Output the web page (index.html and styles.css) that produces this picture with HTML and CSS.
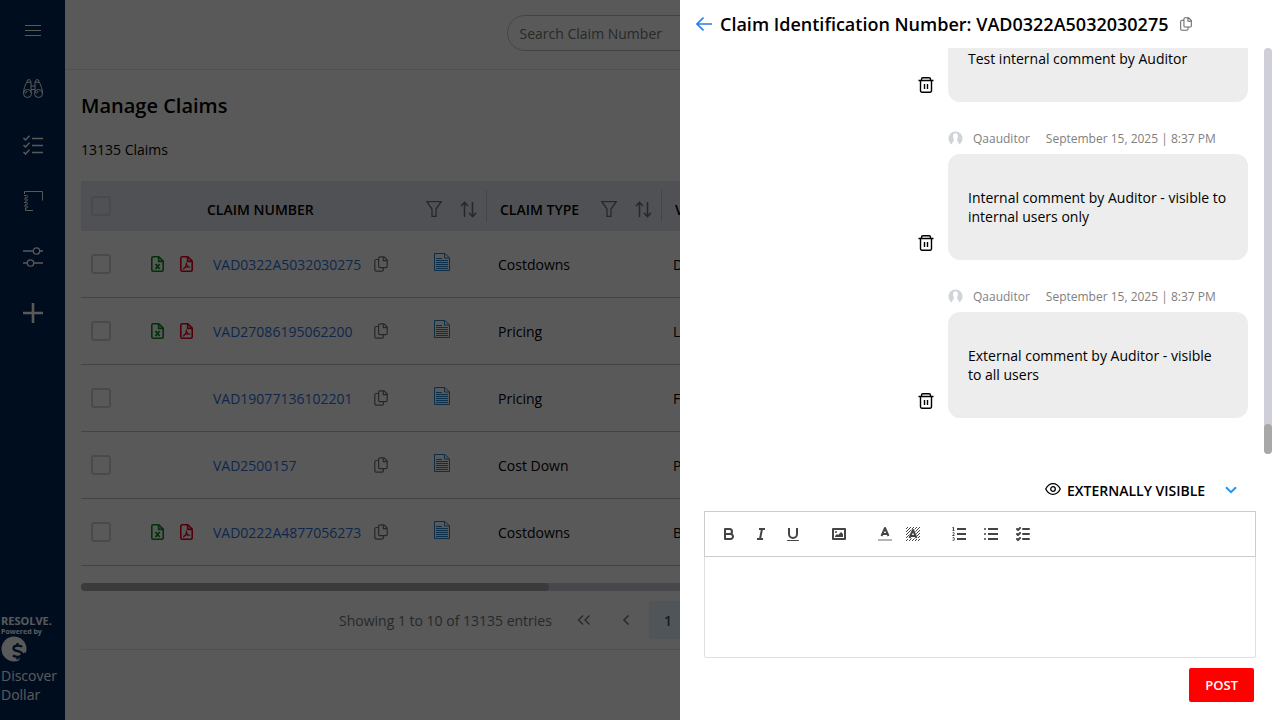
FILE: index.html
```html
<!DOCTYPE html>
<html lang="en">
<head>
<meta charset="utf-8">
<title>Manage Claims</title>
<link rel="stylesheet" href="styles.css">
</head>
<body>
<svg class="sprite" aria-hidden="true">
  <symbol id="copy" viewBox="0 0 14 16"><path d="M6 .8h4l3.2 3.2v6.2a1.4 1.4 0 0 1-1.4 1.4H6a1.4 1.4 0 0 1-1.400-1.400V2.200A1.400 1.400 0 0 1 6 .8zM9.300 1v3.700h3.700M4.500 3.500H2.200A1.400 1.400 0 0 0 .8 4.900v8.900a1.400 1.400 0 0 0 1.400 1.400h5.800a1.400 1.400 0 0 0 1.400-1.400v-2" fill="none" stroke="currentColor" stroke-width="1.200"/></symbol>
  <symbol id="excel" viewBox="0 0 13 16"><path d="M2.200.8h5.600l4.400 4.400v8.600a1.400 1.400 0 0 1-1.400 1.400H2.200a1.400 1.400 0 0 1-1.400-1.400V2.200A1.400 1.400 0 0 1 2.200.8zM7.600 1v4.400H12" fill="none" stroke="currentColor" stroke-width="1.600"/><path d="M4.500 8l4.200 5M8.700 8l-4.200 5" fill="none" stroke="currentColor" stroke-width="1.800"/></symbol>
  <symbol id="pdf" viewBox="0 0 13 16"><path d="M2.200.8h5.600l4.400 4.400v8.600a1.400 1.400 0 0 1-1.400 1.400H2.200a1.400 1.400 0 0 1-1.400-1.400V2.200A1.400 1.400 0 0 1 2.200.8zM7.600 1v4.400H12" fill="none" stroke="currentColor" stroke-width="1.600"/><path d="M6.200 6.500c.3 2.500 1.800 4.700 4 5M6.300 7c.2 2.500-1.300 5.500-3.300 6.300M3.600 12.300c1.700-1.300 4.400-1.700 6.500-1.100" fill="none" stroke="currentColor" stroke-width="1.100"/></symbol>
  <symbol id="doc" viewBox="0 0 16 18"><path d="M.5.5h10.500l4.500 4.500v12.500H.5zM10.500.5v4.500h5M2 5.500h6M2 7.500h12M2 9.500h12M2 11.500h12M2 13.500h12M2 15.500h12" fill="none" stroke="currentColor"/></symbol>
  <symbol id="funnel" viewBox="0 0 16 16"><path d="M.8.7h14.400L10 8v7.300H6V8z" fill="none" stroke="currentColor" stroke-width="1.300"/></symbol>
  <symbol id="sort" viewBox="0 0 17 17"><path d="M4.500 16V1.500M1 5l3.500-3.500L8 5M12.500 1v14.500M9 12l3.500 3.500L16 12" fill="none" stroke="currentColor" stroke-width="1.600"/></symbol>
  <symbol id="trash" viewBox="0 0 16 16"><path d="M.5 3.500h15M3.500 3.500V2.200A1.400 1.400 0 0 1 4.900.8h6.200a1.400 1.400 0 0 1 1.400 1.400v1.300M2.500 3.500v10.300a1.400 1.400 0 0 0 1.400 1.400h8.200a1.400 1.400 0 0 0 1.400-1.400V3.500M6.500 7v5M9.500 7v5" fill="none" stroke="currentColor" stroke-width="1.400"/></symbol>
  <symbol id="avatar" viewBox="0 0 16 16"><circle cx="8" cy="8" r="7.500" fill="#d0d3da"/><path d="M8 2.500c-2 0-2.900 1.500-2.600 3.600.2 1.500.9 2.200.9 3.200 0 1.900-1.800 2.500-2.300 5.200A7.500 7.500 0 0 0 8 16a7.500 7.500 0 0 0 4-1.500c-.5-2.700-2.300-3.300-2.300-5.200 0-1 .7-1.700.9-3.200.3-2.100-.6-3.600-2.600-3.600z" fill="#fff"/></symbol>
</svg>

<div class="app">
  <nav class="sidebar" aria-label="Main">
    <button class="nav-item nav-menu" aria-label="Menu"><svg width="16" height="12" viewBox="0 0 16 12"><path d="M0 .5h16M0 5.500h16M0 10.500h16" stroke="currentColor"/></svg></button>
    <button class="nav-item" aria-label="Search"><svg width="20" height="20" viewBox="0 0 20 20" fill="none" stroke="currentColor"><circle cx="4.500" cy="14.500" r="4"/><circle cx="15.500" cy="14.500" r="4"/><path d="M.5 14.500C.5 10 2 7 3.500 3.500L8 3v11M19.500 14.500C19.500 10 18 7 16.500 3.500L12 3v11M4 3l.5-2 2-.5L8 3M16 3l-.5-2-2-.5L12 3M8 7h4M8 10.500h4M2.500 14.500a2 2 0 0 1 2-2M13.500 14.500a2 2 0 0 1 2-2"/></svg></button>
    <button class="nav-item" aria-label="Tasks"><svg width="20" height="20" viewBox="0 0 20 20" fill="none" stroke="currentColor" stroke-width="1.500"><path d="M9 3.500h11M9 10.500h11M9 17.500h11M.5 3l2 2L6.500.8M.5 10l2 2 4-4.200M.5 17l2 2 4-4.200"/></svg></button>
    <button class="nav-item" aria-label="Notebook"><svg width="20" height="20" viewBox="0 0 20 20" fill="none" stroke="currentColor"><path d="M1.500 3V.5h18v9M2.500 17v2.500H10M1 4.500h2.500a1 1 0 0 1 0 2H2M1 8h2.500a1 1 0 0 1 0 2H2M1 11.500h2.500a1 1 0 0 1 0 2H2M1 15h2.500a1 1 0 0 1 0 2H2"/></svg></button>
    <button class="nav-item" aria-label="Settings"><svg width="20" height="20" viewBox="0 0 20 20" fill="none" stroke="currentColor" stroke-width="1.300"><path d="M0 4h10.500M16.500 4H20M0 16h4.500M10.500 16H20"/><circle cx="13.500" cy="4" r="3.200"/><circle cx="7.500" cy="16" r="3.200"/></svg></button>
    <button class="nav-item" aria-label="Add"><svg width="20" height="20" viewBox="0 0 20 20"><path d="M10 0v20M0 10h20" stroke="currentColor" stroke-width="2.600"/></svg></button>
    <div class="brand">
      <strong class="brand-name">RESOLVE.</strong>
      <span class="brand-by">Powered by</span>
      <svg width="26" height="26" viewBox="0 0 26 26"><circle cx="13" cy="13" r="12.500" fill="currentColor"/><path d="M21 11c-1-1.800-8.500-2.500-8.500 1.400 0 3.800 8.500 1.600 8.500 5.600 0 3.500-7 3.500-9 1.400M16.500 7v3M16.500 20.500v3" fill="none" stroke="#00255b" stroke-width="2.300"/><path d="M19 20l5-4 2 4-5 6h-3z" fill="#00255b"/></svg>
      <span class="brand-company">Discover Dollar</span>
    </div>
  </nav>

  <div class="main">
    <header class="topbar"><input class="search" type="search" placeholder="Search Claim Number" aria-label="Search Claim Number"></header>
    <main class="content">
      <h1 class="page-title">Manage Claims</h1>
      <p class="count">13135 Claims</p>
      <div class="table-wrap">
        <table class="claims">
          <colgroup><col class="col-check"><col class="col-number"><col class="col-type"><col></colgroup>
          <thead>
            <tr>
              <th><input type="checkbox" class="check" aria-label="Select all"></th>
              <th><div class="head head-number"><span>CLAIM NUMBER</span><svg class="ic-funnel"><use href="#funnel"/></svg><svg class="ic-sort"><use href="#sort"/></svg></div></th>
              <th><div class="head"><span>CLAIM TYPE</span><svg class="ic-funnel"><use href="#funnel"/></svg><svg class="ic-sort"><use href="#sort"/></svg></div></th>
              <th><div class="head head-last"><span>V</span></div></th>
            </tr>
          </thead>
          <tbody>
            <tr>
              <td><input type="checkbox" class="check" aria-label="Select VAD0322A5032030275"></td>
              <td><div class="claim"><svg class="ic-file green"><use href="#excel"/></svg><svg class="ic-file red"><use href="#pdf"/></svg><a href="#">VAD0322A5032030275</a><svg class="ic-copy"><use href="#copy"/></svg><svg class="ic-doc"><use href="#doc"/></svg></div></td>
              <td>Costdowns</td><td>D</td>
            </tr>
            <tr>
              <td><input type="checkbox" class="check" aria-label="Select VAD27086195062200"></td>
              <td><div class="claim"><svg class="ic-file green"><use href="#excel"/></svg><svg class="ic-file red"><use href="#pdf"/></svg><a href="#">VAD27086195062200</a><svg class="ic-copy"><use href="#copy"/></svg><svg class="ic-doc"><use href="#doc"/></svg></div></td>
              <td>Pricing</td><td>L</td>
            </tr>
            <tr>
              <td><input type="checkbox" class="check" aria-label="Select VAD19077136102201"></td>
              <td><div class="claim"><i></i><i></i><a href="#">VAD19077136102201</a><svg class="ic-copy"><use href="#copy"/></svg><svg class="ic-doc"><use href="#doc"/></svg></div></td>
              <td>Pricing</td><td>F</td>
            </tr>
            <tr>
              <td><input type="checkbox" class="check" aria-label="Select VAD2500157"></td>
              <td><div class="claim"><i></i><i></i><a href="#">VAD2500157</a><svg class="ic-copy"><use href="#copy"/></svg><svg class="ic-doc"><use href="#doc"/></svg></div></td>
              <td>Cost Down</td><td>P</td>
            </tr>
            <tr>
              <td><input type="checkbox" class="check" aria-label="Select VAD0222A4877056273"></td>
              <td><div class="claim"><svg class="ic-file green"><use href="#excel"/></svg><svg class="ic-file red"><use href="#pdf"/></svg><a href="#">VAD0222A4877056273</a><svg class="ic-copy"><use href="#copy"/></svg><svg class="ic-doc"><use href="#doc"/></svg></div></td>
              <td>Costdowns</td><td>B</td>
            </tr>
          </tbody>
        </table>
      </div>
      <div class="hscroll"><div class="hscroll-thumb"></div></div>
      <div class="paginator">
        <span class="entries">Showing 1 to 10 of 13135 entries</span>
        <button class="page" aria-label="First page"><svg width="14" height="10" viewBox="0 0 14 10"><path d="M6 .5L1.500 5 6 9.500M12.500.5L8 5l4.500 4.500" fill="none" stroke="currentColor" stroke-width="1.400"/></svg></button>
        <button class="page" aria-label="Previous page"><svg width="8" height="10" viewBox="0 0 8 10"><path d="M6.500.5L2 5l4.500 4.500" fill="none" stroke="currentColor" stroke-width="1.500"/></svg></button>
        <button class="page page-current">1</button>
      </div>
    </main>
  </div>
</div>

<div class="overlay"></div>

<aside class="drawer" aria-label="Claim comments">
  <header class="drawer-head">
    <button class="plain back" aria-label="Back"><svg width="16" height="14" viewBox="0 0 16 14"><path d="M16 7H1M7.500.6L1 7l6.500 6.400" fill="none" stroke="currentColor" stroke-width="1.600"/></svg></button>
    <h2 class="drawer-title">Claim Identification Number: VAD0322A5032030275</h2>
    <button class="plain copy" aria-label="Copy"><svg class="ic-copy-small"><use href="#copy"/></svg></button>
  </header>
  <div class="thread">
    <div class="comments">
      <article class="comment">
        <button class="plain trash" aria-label="Delete"><svg class="ic-trash"><use href="#trash"/></svg></button>
        <p class="bubble">Test internal comment by Auditor</p>
      </article>
      <article class="comment">
        <div class="meta"><svg class="ic-avatar"><use href="#avatar"/></svg><span>Qaauditor</span><time>September 15, 2025 | 8:37 PM</time></div>
        <button class="plain trash" aria-label="Delete"><svg class="ic-trash"><use href="#trash"/></svg></button>
        <p class="bubble">Internal comment by Auditor - visible to internal users only</p>
      </article>
      <article class="comment">
        <div class="meta"><svg class="ic-avatar"><use href="#avatar"/></svg><span>Qaauditor</span><time>September 15, 2025 | 8:37 PM</time></div>
        <button class="plain trash" aria-label="Delete"><svg class="ic-trash"><use href="#trash"/></svg></button>
        <p class="bubble">External comment by Auditor - visible to all users</p>
      </article>
    </div>
    <div class="vscroll"><div class="vscroll-thumb"></div></div>
  </div>
  <form class="composer">
    <label class="visibility">
      <svg class="eye" width="16" height="12" viewBox="0 0 16 12" fill="none" stroke="currentColor" stroke-width="1.300"><path d="M.7 6C2.500 2.500 5 .7 8 .7S13.500 2.500 15.300 6C13.500 9.500 11 11.300 8 11.300S2.500 9.500.7 6z"/><circle cx="8" cy="6" r="2.300"/></svg>
      <select class="visibility-select" aria-label="Comment visibility"><option>EXTERNALLY VISIBLE</option></select>
      <svg class="chevron" width="12" height="8" viewBox="0 0 12 8"><path d="M1 1.200l5 5 5-5" fill="none" stroke="currentColor" stroke-width="2"/></svg>
    </label>
    <div class="toolbar">
      <div class="tools spaced">
        <button type="button" class="tool" aria-label="Bold"><svg viewBox="0 0 18 18"><path d="M5,4H9.500A2.500,2.500,0,0,1,12,6.500v0A2.500,2.500,0,0,1,9.500,9H5V4Z"/><path d="M5,9h5.500A2.500,2.500,0,0,1,13,11.500v0A2.500,2.500,0,0,1,10.500,14H5V9Z"/></svg></button>
        <button type="button" class="tool" aria-label="Italic"><svg viewBox="0 0 18 18"><path d="M7 4h6M5 14h6M8 14L10 4"/></svg></button>
        <button type="button" class="tool" aria-label="Underline"><svg viewBox="0 0 18 18"><path d="M5,3V9a4,4,0,0,0,8,0V3"/><rect class="fill" x="3" y="15" width="12" height="1" rx=".5"/></svg></button>
      </div>
      <div class="tools">
        <button type="button" class="tool" aria-label="Image"><svg viewBox="0 0 18 18"><rect x="3" y="4" width="12" height="10"/><circle class="fill" cx="6" cy="7" r="1"/><path class="fill" d="M5 12v-1l2-2 1 1 3-3 2 2v3z"/></svg></button>
      </div>
      <div class="tools">
        <button type="button" class="tool" aria-label="Text color"><svg viewBox="0 0 18 18"><path opacity=".4" d="M2 15h14"/><path d="M5.500 11L9 3l3.500 8M11.630 9H6.380"/></svg></button>
        <button type="button" class="tool" aria-label="Highlight color"><svg viewBox="0 0 18 18"><defs><pattern id="hatch" width="3" height="3" patternUnits="userSpaceOnUse"><path class="fill" d="M2 0h1v1H2zM1 1h1v1H1zM0 2h1v1H0z"/></pattern></defs><path d="M2 2h14v14H2zM7.500 4L4 13v1h3l1-1h2l1 1h3v-1L10.500 4z" fill="url(#hatch)" fill-rule="evenodd" stroke="none"/><path d="M5.500 13L9 5l3.500 8M11.630 11H6.380"/></svg></button>
      </div>
      <div class="tools spaced">
        <button type="button" class="tool" aria-label="Numbered list"><svg viewBox="0 0 18 18"><path d="M7 4h9M7 9h9M7 14h9"/><path class="thin" d="M2.500 5.500h2M2.300 2.800l1.200-.5v3M4.500,10.500h-2c0-.234,1.850-1.076,1.850-2.234A0.959,0.959,0,0,0,2.500,8.156M2.500,14.846a0.959,0.959,0,0,0,1.850-.109A0.700,0.700,0,0,0,3.750,14a0.688,0.688,0,0,0,.6-0.736,0.959,0.959,0,0,0-1.850-.109"/></svg></button>
        <button type="button" class="tool" aria-label="Bulleted list"><svg viewBox="0 0 18 18"><path d="M6 4h10M6 9h10M6 14h10"/><path stroke-linecap="round" d="M3 4h.01M3 9h.01M3 14h.01"/></svg></button>
        <button type="button" class="tool" aria-label="Check list"><svg viewBox="0 0 18 18"><path d="M9 4h6M9 9h6M9 14h6M3 4l1 1 2-2M3 9l1 1 2-2M3 14l1 1 2-2" stroke-linecap="round"/></svg></button>
      </div>
    </div>
    <textarea class="editor" aria-label="Comment"></textarea>
    <button type="button" class="post">POST</button>
  </form>
</aside>
</body>
</html>
```

FILE: styles.css
```css
* { box-sizing: border-box; }

body {
  margin: 0;
  font: 14px/19px "Open Sans", "Noto Sans", sans-serif;
  color: #000;
  background: #fff;
}

button, input, select, textarea { font: inherit; color: inherit; }
svg { display: block; flex: none; }
.sprite { position: absolute; width: 0; height: 0; }

.app { display: flex; height: 100vh; overflow: hidden; }

/* Sidebar */
.sidebar {
  flex: none;
  display: flex;
  flex-direction: column;
  width: 65px;
  padding-bottom: 16px;
  background: #00255b;
  color: #fff;
}
.nav-item {
  display: flex;
  align-items: center;
  justify-content: center;
  height: 56px;
  padding: 0;
  border: 0;
  background: none;
}
.nav-menu { height: 61px; }
.brand {
  display: flex;
  flex-direction: column;
  margin-top: auto;
  padding-left: 1px;
}
.brand-name { font-size: 11px; line-height: 13px; }
.brand-by { font-size: 7px; line-height: 9px; font-weight: 700; }
.brand-company { margin-top: 4px; }

/* Main area */
.main { flex: 1; min-width: 0; }
.topbar {
  display: flex;
  justify-content: center;
  padding: 15px 16px 18px;
  border-bottom: 1px solid #e2e2e2;
}
.search {
  width: 332px;
  height: 36px;
  padding: 0 12px;
  border: 1px solid #c4c4c4;
  border-radius: 18px;
  background: #fff;
  appearance: none;
}
.search::placeholder { color: #757575; opacity: 1; }
.content { padding: 22px 16px 0; }
.page-title { margin: 0; font-size: 20px; line-height: 28px; font-weight: 600; }
.count { margin: 20px 0 22px; }

.table-wrap { overflow: hidden; }
.claims { width: 100%; border-spacing: 0; table-layout: fixed; }
.col-check { width: 40px; }
.col-number { width: 366px; }
.col-type { width: 175px; }
.claims th { height: 50px; padding: 0; background: #e4e7f0; text-align: left; font-weight: 600; }
.claims td { height: 67px; padding: 0 11px; border-bottom: 1px solid #c0c0c4; }
.claims th:first-child, .claims td:first-child { padding: 0 0 0 10px; }
.check {
  display: block;
  width: 20px;
  height: 20px;
  margin: 0;
  border: 2px solid #ced4da;
  border-radius: 3px;
  background: #fff;
  appearance: none;
}
th .check { background: none; }
.head {
  display: flex;
  align-items: center;
  gap: 18px;
  height: 32px;
  padding: 6px 9px 0 13px;
  border-right: 1px solid #c4c6ce;
}
.head span { flex: 1; }
.head-number { padding-left: 86px; }
.head-last { border: 0; }
.ic-funnel { width: 16px; height: 16px; color: #6c757d; }
.ic-sort { width: 17px; height: 17px; color: #6c757d; }
.claim {
  display: grid;
  grid-template-columns: 29px 33px 161px 60px auto;
  align-items: center;
  padding-left: 19px;
}
.claim a { color: #2a73dd; text-decoration: none; }
.ic-file { width: 13px; height: 16px; }
.green { color: #078a1c; }
.red { color: #e8001c; }
.ic-copy { width: 14px; height: 16px; color: #707070; }
.ic-doc { width: 16px; height: 18px; margin-bottom: 4px; color: #2483cc; }

.hscroll { height: 8px; margin-top: 17px; border-radius: 4px; background: #cfcfd9; }
.hscroll-thumb { width: 468px; height: 8px; border-radius: 4px; background: #a8a8a8; }
.paginator {
  display: flex;
  align-items: center;
  gap: 4px;
  padding: 10px 0 10px 258px;
  border-bottom: 1px solid #e2e2e2;
  color: #6c757d;
}
.entries { margin-right: 9px; }
.page {
  display: flex;
  align-items: center;
  justify-content: center;
  width: 38px;
  height: 38px;
  padding: 0;
  border: 0;
  border-radius: 3px;
  background: none;
}
.page-current { background: #e3f2fd; color: #495057; font-weight: 600; }

/* Drawer */
.overlay { position: fixed; inset: 0; background: rgba(0, 0, 0, 0.65); }
.drawer {
  position: fixed;
  inset: 0 0 0 auto;
  display: flex;
  flex-direction: column;
  width: 600px;
  max-width: 100%;
  background: #fff;
}
.plain { padding: 0; border: 0; background: none; }
.drawer-head { display: flex; align-items: center; height: 48px; padding: 0 16px; gap: 8px; }
.back { color: #2a7de1; }
.drawer-title { margin: 0; font-size: 18px; line-height: 24px; font-weight: 600; }
.copy { margin-left: 4px; color: #666; }
.ic-copy-small { width: 12px; height: 14px; }

.thread { flex: 1; min-height: 0; display: flex; gap: 16px; padding-right: 8px; }
.comments {
  flex: 1;
  display: flex;
  flex-direction: column;
  justify-content: flex-end;
  gap: 28px;
  padding-bottom: 36px;
  overflow: hidden;
}
.comment {
  display: grid;
  grid-template-columns: 1fr 300px;
  column-gap: 14px;
  row-gap: 8px;
}
.meta {
  grid-column: 2;
  display: flex;
  align-items: center;
  height: 16px;
  font-size: 12px;
  color: #808080;
}
.meta span { margin: 0 16px 0 10px; }
.ic-avatar { width: 15px; height: 15px; }
.trash { justify-self: end; align-self: end; margin-bottom: 9px; }
.ic-trash { width: 16px; height: 16px; }
.bubble { margin: 0; padding: 34px 20px; border-radius: 12px; background: #ededed; }

.vscroll { display: flex; flex-direction: column; justify-content: flex-end; width: 8px; border-radius: 4px; background: #cfcfd9; }
.vscroll-thumb { height: 30px; border-radius: 4px; background: #a8a8a8; }

.composer { display: flex; flex-direction: column; padding: 26px 24px 18px; }
.visibility { display: flex; align-items: center; align-self: flex-end; height: 20px; margin: 0 19px 11px 0; }
.visibility-select { margin: 0 19px 0 6px; padding: 0; border: 0; background: none; font-weight: 600; appearance: none; }
.eye { margin-bottom: 2px; }
.chevron { color: #2196f3; }
.toolbar {
  display: flex;
  gap: 18px;
  padding: 10px;
  border: 1px solid #ccc;
}
.tools { display: flex; }
.spaced { gap: 4px; }
.tool { width: 28px; height: 24px; padding: 3px 5px; border: 0; background: none; }
.tool svg { width: 18px; height: 18px; fill: none; stroke: #444; stroke-width: 2; stroke-linejoin: round; }
.tool .fill { fill: #444; stroke: none; }
.tool .thin { stroke-width: 1; }
.editor {
  display: block;
  width: 100%;
  height: 101px;
  padding: 12px 15px;
  border: 1px solid #e0e0e0;
  border-top: 0;
  border-radius: 0 0 3px 3px;
  resize: none;
}
.post {
  align-self: flex-end;
  height: 34px;
  margin: 10px 2px 0 0;
  padding: 0 16px;
  border: 0;
  border-radius: 2px;
  background: #f00;
  color: #fff;
  font-size: 13px;
  font-weight: 600;
}
```
